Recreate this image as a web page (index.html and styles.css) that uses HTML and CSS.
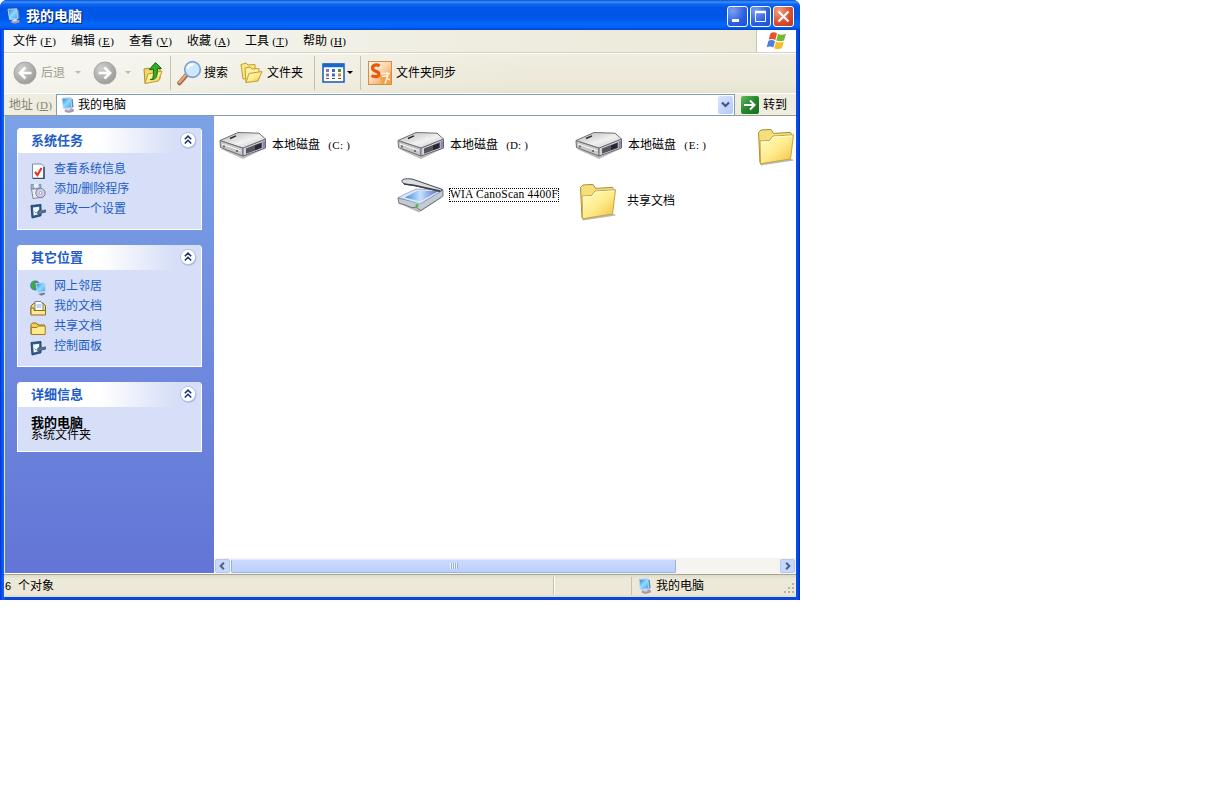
FILE: index.html
```html
<!DOCTYPE html>
<html lang="zh-CN">
<head>
<meta charset="utf-8">
<title>我的电脑</title>
<link rel="stylesheet" href="styles.css">
</head>
<body>
<svg class="defs" width="0" height="0">
  <defs>
    <linearGradient id="gFolder" x1="0" y1="0" x2="1" y2="1"><stop offset="0" stop-color="#fffbc4"/><stop offset=".5" stop-color="#ffec8d"/><stop offset="1" stop-color="#f0c040"/></linearGradient>
    <linearGradient id="gScreen" x1="0" y1="0" x2="1" y2="1"><stop offset="0" stop-color="#2474de"/><stop offset=".5" stop-color="#8edcff"/><stop offset="1" stop-color="#3a97ea"/></linearGradient>
    <linearGradient id="gMetal" x1="0" y1="0" x2="1" y2="1"><stop offset="0" stop-color="#b4b4b6"/><stop offset=".55" stop-color="#f1f1f2"/><stop offset="1" stop-color="#c4c4c8"/></linearGradient>
    <linearGradient id="gGlass" x1="0" y1="0" x2="1" y2="0"><stop offset="0" stop-color="#3d8be6"/><stop offset=".45" stop-color="#c4e2ff"/><stop offset="1" stop-color="#4a6fc8"/></linearGradient>
    <radialGradient id="gGray" cx=".35" cy=".3" r=".75"><stop offset="0" stop-color="#d0d0ce"/><stop offset="1" stop-color="#9a9a9a"/></radialGradient>
    <linearGradient id="gOrange" x1="0" y1="0" x2="1" y2="1"><stop offset="0" stop-color="#ffffff"/><stop offset=".45" stop-color="#fbd9b4"/><stop offset="1" stop-color="#f08c28"/></linearGradient>

    <symbol id="computer" viewBox="0 0 16 16">
      <path d="M5 13.200 9 11l4.500 1.500v1.700L9 15.600 5 14.600Z" fill="#a89cae" stroke="#8a8398" stroke-width=".5"/>
      <path d="M10.500 1 12.800 2.200 13.500 10 10.500 11.800Z" fill="#5d86c4"/>
      <path d="M2 1.300 10.800 .8 11.700 10.600 3.600 11.400Z" fill="url(#gScreen)" stroke="#b9d2f2" stroke-width="1"/>
      <path d="M6.500 11.500v2l4-.2v-2.200Z" fill="#d5dcec"/>
    </symbol>
    <symbol id="drive" viewBox="0 0 48 28">
      <path d="M2 18 24 28 47 17 24 20Z" fill="#777" opacity=".5"/>
      <path d="M1 9.500 24 17 24 25 1.500 16.500Z" fill="#c6c6c9" stroke="#6e6e72"/>
      <path d="M24 17 46.500 8 46.500 17 24 25Z" fill="#d4d4d8" stroke="#6a6870"/>
      <path d="M1 9.500 19 1.500 40 2.200 46.500 8 24 17Z" fill="url(#gMetal)" stroke="#707074"/>
      <path d="M27 17.500 43 11.200V17L27 22.800Z" fill="#58545e"/>
      <path d="m36 14.500 6-2.300v4.600l-6 2.200Z" fill="#29242f"/>
      <path d="m43.500 10.500 2.500-1v7l-2.500 1Z" fill="#8c84bb"/>
      <path d="m11 7.500 6-2.700" stroke="#2b2b2b" stroke-width="1.400"/>
      <path d="m3 13 19 6.700" stroke="#f6f6f6" stroke-width="1.200"/>
      <path d="M5 14.500v2M18 19v2" stroke="#444" stroke-width="1.300"/>
    </symbol>
    <symbol id="folder" viewBox="0 0 38 38">
      <path d="M3 35.500 35 31l2 1.500L4 37.500Z" fill="#8b8b84" opacity=".6"/>
      <path d="M1.500 4.500 4 2l10-.6 2.500 4 17-1 1.500 3L32 30 3 35Z" fill="#f6df7b" stroke="#a98d35"/>
      <path d="M3 13 12.500 12.500l3.500-4.500 20.500-1.200L33.500 31 3.500 35.800Z" fill="url(#gFolder)" stroke="#c6a33b"/>
      <path d="M4 14 13 13.600l3.600-4.600L35 8" fill="none" stroke="#fffde0"/>
    </symbol>
    <symbol id="scanner" viewBox="0 0 48 36">
      <path d="M3 27 22 35.500 46 20 24 28Z" fill="#666" opacity=".45"/>
      <path d="M1 21 24 26 46 13v6L24 33.500c-3-1-3-4-7-3-4 .7-7-3-15-4Z" fill="#c2cad6" stroke="#555d6b" stroke-width=".8"/>
      <path d="M1 20.500 19 12 46 13 23 27Z" fill="#dbe6f4" stroke="#8797ad" stroke-width=".7"/>
      <path d="m8 20.500 12-6.500 22-.3L23 24.500Z" fill="url(#gGlass)"/>
      <path d="M5 4.500C4.500 2 8 1.500 15 2L45.500 12.500 43 14.500 17 8.500 7 7Z" fill="#dcdde4" stroke="#44464f"/>
      <path d="m7 7 11 1.500 25 5.500" fill="none" stroke="#3e4048" stroke-width="1.500"/>
      <circle cx="20" cy="28.500" r="1.600" fill="#42c531"/>
    </symbol>
    <symbol id="settings" viewBox="0 0 16 16">
      <path d="M1 2.500 11 1.500v11.300L2 15Z" fill="#2f5c92" stroke="#1d3d66" stroke-width=".9"/>
      <path d="m3 4.400 6.200-.7v7.400L3.700 12.500Z" fill="#f2f9ff"/>
      <path d="m4.600 8.500 1.600 1.700 3-3.200" fill="none" stroke="#6aa0cf" stroke-width="1"/>
      <path d="m8 8.500 3-2 1 1.200 3.500-.8v2.300l-3.500.6-1.500 1.500-3-.8Z" fill="#56759a" stroke="#2c4464" stroke-width=".7"/>
    </symbol>
    <symbol id="chev" viewBox="0 0 18 18">
      <circle cx="9.500" cy="9.800" r="8" fill="#8b9ed0" opacity=".6"/>
      <circle cx="9" cy="9" r="7.600" fill="#fff" stroke="#b6c2e6"/>
      <path d="m5.800 8.300 3.200-3.200 3.200 3.200M5.800 12.500l3.200-3.200 3.200 3.200" fill="none" stroke="#1b3580" stroke-width="1.600"/>
    </symbol>
  </defs>
</svg>

<div class="window">
  <header class="titlebar">
    <svg class="i16"><use href="#computer"/></svg>
    <h1 class="title">我的电脑</h1>
    <div class="controls">
      <span class="ctl"><svg viewBox="0 0 19 19"><path d="M4 13.500h7" stroke="#fff" stroke-width="3"/></svg></span>
      <span class="ctl"><svg viewBox="0 0 19 19"><path d="M4.500 4.500h10v10h-10Z" fill="none" stroke="#fff"/><path d="M4 5h11" stroke="#fff" stroke-width="2.500"/></svg></span>
      <span class="ctl close"><svg viewBox="0 0 19 19"><path d="m4.500 4.500 10 10m0-10-10 10" stroke="#fff" stroke-width="2.200"/></svg></span>
    </div>
  </header>

  <div class="frame">
    <nav class="menubar">
      <span class="menu">文件<b class="key"><i>(</i><u>F</u><i>)</i></b></span>
      <span class="menu">编辑<b class="key"><i>(</i><u>E</u><i>)</i></b></span>
      <span class="menu">查看<b class="key"><i>(</i><u>V</u><i>)</i></b></span>
      <span class="menu">收藏<b class="key"><i>(</i><u>A</u><i>)</i></b></span>
      <span class="menu">工具<b class="key"><i>(</i><u>T</u><i>)</i></b></span>
      <span class="menu">帮助<b class="key"><i>(</i><u>H</u><i>)</i></b></span>
      <span class="flag"><svg width="22" height="20" viewBox="0 0 22 20">
        <path d="M4.500 2.200Q8 .3 11 2.400L9.300 9Q6 7 2.700 8.600Z" fill="#e8542a"/>
        <path d="M12 2.900Q15.500 4.500 20 2.800L18 9.500Q14 11 10.300 9.400Z" fill="#76b82f"/>
        <path d="M2.400 9.800Q6 8.100 9 10.200L7.300 16.600Q4 14.600.7 16.200Z" fill="#4a7fdc"/>
        <path d="M10 10.600Q13.700 12.300 17.700 10.700L15.900 17.300Q12 19 8.200 17.200Z" fill="#f7bd28"/>
      </svg></span>
    </nav>

    <div class="toolbar">
      <svg class="nav-icon" viewBox="0 0 24 24"><circle cx="12" cy="12" r="11" fill="url(#gGray)" stroke="#a6a6a2"/><path d="M18.500 12H7m5.500-5.500L7 12l5.500 5.500" fill="none" stroke="#fff" stroke-width="2.700"/></svg>
      <span class="label muted back">后退</span>
      <i class="caret dim"></i>
      <svg class="nav-icon forward" viewBox="0 0 24 24"><circle cx="12" cy="12" r="11" fill="url(#gGray)" stroke="#a6a6a2"/><path d="M5.500 12H17m-5.500-5.500L17 12l-5.500 5.500" fill="none" stroke="#fff" stroke-width="2.700"/></svg>
      <i class="caret dim second"></i>
      <svg class="up" width="22" height="24" viewBox="0 0 22 24"><path d="m2 8 5-1 2 2 9-1.500V18L3 22.500Z" fill="#f3d766" stroke="#b08f2c"/><path d="M3 22.500 6 13l14-3-3.500 10Z" fill="url(#gFolder)" stroke="#c29d31"/><path d="M8 18.500c3 0 3.500-2 3.500-10H7.300L13.500 1.500l6 6h-4c0 9-2 12-7.500 11Z" fill="#36ac28" stroke="#14710f"/></svg>
      <i class="sep s1"></i>
      <svg class="search" width="25" height="26" viewBox="0 0 25 26"><path d="m2.500 23 7-8" stroke="#a5694a" stroke-width="4.500" stroke-linecap="round"/><path d="m2.500 22.300 6.500-7.500" stroke="#e0a880" stroke-width="2.500" stroke-linecap="round"/><circle cx="15.500" cy="9.500" r="7.800" fill="#cceaff" stroke="#7da1d2" stroke-width="1.700"/><path d="M10.500 9c.5-3 3-4.500 6-4.500" fill="none" stroke="#fff" stroke-width="2"/></svg>
      <span class="label">搜索</span>
      <svg class="folders" width="23" height="22" viewBox="0 0 23 22"><path d="M1 2.500 6 1l2 2 7-.5v13L3 17Z" fill="#fbe684" stroke="#c29c30"/><path d="m5 6 5-1 2 2 7-.5V17L6 20.500Z" fill="#fff0a0" stroke="#c29c30"/><path d="m6 20.500 3-9 13-2-4 9.500Z" fill="url(#gFolder)" stroke="#c29c30"/></svg>
      <span class="label">文件夹</span>
      <i class="sep s2"></i>
      <svg class="views" width="23" height="20" viewBox="0 0 23 20"><rect x="1" y="1" width="21" height="18" fill="#fff" stroke="#1458b4" stroke-width="1.500"/><path d="M1 2.500h21" stroke="#1767cf" stroke-width="3.500"/><path d="M4 7.500h3M4 12h3" stroke="#8d789f" stroke-width="3"/><path d="M10 7.500h3M10 12h3" stroke="#4469c4" stroke-width="3"/><path d="M16 7.500h3" stroke="#3b9837" stroke-width="3"/><path d="M16 12h3" stroke="#d98828" stroke-width="3"/><path d="M4 15.500h3m3 0h3m3 0h3" stroke="#555"/></svg>
      <i class="caret"></i>
      <i class="sep s3"></i>
      <svg class="sync" width="24" height="24" viewBox="0 0 24 24"><rect x=".5" y=".5" width="23" height="23" fill="url(#gOrange)" stroke="#d88b48"/><path d="m11 15 12-4v12H14Z" fill="#f4a24a"/><path d="M12 12.500h10M14 15.500l6-1-3 8M19 11v6l3 2" stroke="#fff3df" stroke-width="1.500" fill="none"/><path d="M11.500 5C8.500 3 4.500 4 4.500 7c0 4 6.500 2.500 6.500 6 0 3-4.500 3.500-7.500 1.500" fill="none" stroke="#e7590b" stroke-width="3.200"/></svg>
      <span class="label">文件夹同步</span>
    </div>

    <div class="addressbar">
      <span class="address-label">地址<b class="key"><i>(</i><u>D</u><i>)</i></b></span>
      <div class="field"><svg class="i16"><use href="#computer"/></svg><span class="field-text">我的电脑</span>
        <span class="drop"><svg viewBox="0 0 15 17"><path d="m4 6.500 3.500 3.500L11 6.500" fill="none" stroke="#3f5683" stroke-width="2.200"/></svg></span></div>
      <span class="go"><svg viewBox="0 0 18 18"><path d="M3 9h10M9 4.500 13.500 9 9 13.500" fill="none" stroke="#fff" stroke-width="2"/></svg></span>
      <span>转到</span>
    </div>

    <main class="body">
      <aside class="side">
        <section class="panel p1">
          <h2 class="head">系统任务<svg class="chev"><use href="#chev"/></svg></h2>
          <ul class="links">
            <li class="link"><svg viewBox="0 0 16 16"><path d="M2.500 1h9L14 3.500V15.500H2.500Z" fill="#fff" stroke="#7a8bab"/><path d="M14 4v11.500H3" fill="none" stroke="#344a71" stroke-width="1.500"/><path d="m5 9 2.500 3 4-7" fill="none" stroke="#df3825" stroke-width="2.200"/></svg>查看系统信息</li>
            <li class="link"><svg viewBox="0 0 16 16"><path d="M1 1.500h10v5H1Z" fill="#8fb0cf" stroke="#6d8bab" stroke-width=".7"/><path d="M4 .8h4.500v4H4Z" fill="#e9f5ef"/><path d="M1.500 6h9.500l2 8-10 1.500Z" fill="#eef1f4" stroke="#77889a"/><circle cx="10.500" cy="10" r="4.700" fill="#d5c9ee" stroke="#8077a9"/><path d="m10.500 10 2-4 2 2Z" fill="#9ee3ba"/><circle cx="10.500" cy="10" r="1.400" fill="#fff" stroke="#777" stroke-width=".5"/></svg>添加/删除程序</li>
            <li class="link"><svg><use href="#settings"/></svg>更改一个设置</li>
          </ul>
        </section>
        <section class="panel p2">
          <h2 class="head">其它位置<svg class="chev"><use href="#chev"/></svg></h2>
          <ul class="links">
            <li class="link"><svg viewBox="0 0 16 16"><circle cx="5.200" cy="5.500" r="5" fill="#3977cb"/><path d="M2 2c2-2 5-1 5 1L5 5l1 3-2 2C1 8 0 5 2 2Z" fill="#3faa42"/><path d="m6 3.500 9-.8.500 8.500-8 1.500Z" fill="url(#gScreen)" stroke="#c3d7ef"/><path d="m8 14 6-1.500 1.500 1.500-4 1.700Z" fill="#777d96"/></svg>网上邻居</li>
            <li class="link"><svg viewBox="0 0 16 16"><path d="M1 6 4 3h9l2.500 3v8.500H1Z" fill="#f5dc72" stroke="#82691d"/><path d="M5 1.500h6L13 4v7H5Z" fill="#fff" stroke="#6f87a5"/><path d="M6.500 5h5M6.500 7h5" stroke="#8ca8c9"/><path d="M1 8h3v2.500h11.500v4.500H1Z" fill="#ffe990" stroke="#8b7021"/></svg>我的文档</li>
            <li class="link"><svg viewBox="0 0 16 16"><path d="M1 4.500 2.500 3h4L8 5h6.500v9H1Z" fill="#f3cf55" stroke="#8e6c19"/><path d="M1.300 7.500H7L8.500 6h6.700v8.500H1.300Z" fill="#ffe98f" stroke="#a17d20"/></svg>共享文档</li>
            <li class="link"><svg><use href="#settings"/></svg>控制面板</li>
          </ul>
        </section>
        <section class="panel p3">
          <h2 class="head">详细信息<svg class="chev"><use href="#chev"/></svg></h2>
          <div class="details"><strong class="name">我的电脑</strong><span>系统文件夹</span></div>
        </section>
      </aside>

      <div class="content">
        <div class="files">
          <div class="col">
            <div class="file"><svg class="drive"><use href="#drive"/></svg><span class="disk">本地磁盘<b class="key"><i>(</i><i>C</i><i class="colon">:</i><i>)</i></b></span></div>
          </div>
          <div class="col">
            <div class="file"><svg class="drive"><use href="#drive"/></svg><span class="disk">本地磁盘<b class="key"><i>(</i><i>D</i><i class="colon">:</i><i>)</i></b></span></div>
            <div class="file scan"><svg class="scanner"><use href="#scanner"/></svg><span class="focus">WIA CanoScan 4400F</span></div>
          </div>
          <div class="col">
            <div class="file"><svg class="drive"><use href="#drive"/></svg><span class="disk">本地磁盘<b class="key"><i>(</i><i>E</i><i class="colon">:</i><i>)</i></b></span></div>
            <div class="file shared"><svg class="folder"><use href="#folder"/></svg><span>共享文档</span></div>
          </div>
          <div class="col">
            <div class="file last"><svg class="folder"><use href="#folder"/></svg></div>
          </div>
        </div>
        <div class="scroll">
          <span class="sbtn"><svg viewBox="0 0 14 13"><path d="M8.500 3 5 6.500 8.500 10" fill="none" stroke="#4d6185" stroke-width="2.200"/></svg></span>
          <span class="thumb"><i class="grip"></i></span>
          <span class="sbtn end"><svg viewBox="0 0 14 13"><path d="M5.500 3 9 6.500 5.500 10" fill="none" stroke="#4d6185" stroke-width="2.200"/></svg></span>
        </div>
      </div>
    </main>

    <footer class="status">
      <span class="count"><b class="six">6</b>个对象</span>
      <span class="blank"></span>
      <span class="zone"><svg class="i16"><use href="#computer"/></svg>我的电脑</span>
      <svg class="resize" width="12" height="12" viewBox="0 0 12 12"><path d="M9 1h2M5 5h2m2 0h2M1 9h2m2 0h2m2 0h2" stroke="#b8b4a2" stroke-width="2"/></svg>
    </footer>
  </div>
</div>
</body>
</html>
```
FILE: styles.css
```css
* { box-sizing: border-box; }
body { margin: 0; background: #fff; color: #000; font: 12px/14px "Liberation Sans", "Noto Sans CJK SC", sans-serif; }
.defs { position: absolute; }
svg { display: block; flex: none; }
span { white-space: nowrap; }
.i16 { width: 16px; height: 16px; }
.key { display: inline-flex; margin-left: 2px; font: 11px/14px "Liberation Serif", "Noto Sans CJK SC", serif; }
.key i, .key u { width: 6px; font-style: normal; display: flex; justify-content: center; }
.key u { width: 8px; height: 13px; text-decoration: none; border-bottom: 1px solid currentColor; margin: 0 -1px; }

.window { width: 800px; height: 600px; display: flex; flex-direction: column; background: linear-gradient(90deg, #0831d9 0, #0855ee 2px, #1664f5 4px, #0b45df 5px, #0b45df 795px, #0a50ee 797px, #0030c4 800px); border-radius: 7px 7px 0 0; overflow: hidden; }
.titlebar { height: 30px; flex: none; display: flex; align-items: center; padding: 2px 6px 0 6px; background: linear-gradient(#0a4fd0 0, #3c91ff 2px, #0f68f0 4px, #0055e5 8px, #0057e8 18px, #0567fb 24px, #0162f5 27px, #0043cf 30px); }
.title { flex: 1; margin: 0 0 0 4px; font-size: 14px; line-height: 18px; font-weight: 700; color: #fff; text-shadow: 1px 1px 1px #06246e; }
.controls { display: flex; gap: 2px; }
.ctl { width: 21px; height: 21px; border: 1px solid #fff; border-radius: 3px; background: radial-gradient(circle at 25% 20%, #7da0f4, #2a5ee0 60%, #1d4fd2); }
.ctl.close { background: radial-gradient(circle at 25% 20%, #f0a080, #dc5030 55%, #b93616); }

.frame { flex: 1; margin: 0 4px 3px 4px; min-height: 0; display: flex; flex-direction: column; background: #ece9d8; }
.menubar { height: 23px; flex: none; display: flex; align-items: center; gap: 16px; padding-left: 9px; background: linear-gradient(90deg, #f7f8f6, #efede0 60%, #ece9d8); border-bottom: 1px solid #d6d2c0; }
.menu { width: 42px; display: flex; }
.flag { width: 40px; height: 22px; margin-left: auto; background: #fff; border-left: 1px solid #c9c5b4; display: grid; place-items: center; }

.toolbar { height: 40px; flex: none; display: flex; align-items: center; padding: 0 0 2px 9px; border-top: 1px solid #fff; background: linear-gradient(90deg, rgba(250,250,248,.7), rgba(236,233,216,.3) 65%), linear-gradient(#f1efe4, #ece9d8 75%, #e5e1ce); }
.nav-icon { width: 24px; height: 24px; }
.forward { margin-left: 12px; }
.muted { color: #a09d8f; }
.back { margin: 0 10px 0 4px; }
.caret { width: 0; border: 3px solid transparent; border-top-color: #000; border-bottom: 0; }
.caret.dim { border-top-color: #bebbad; }
.second { margin-left: 8px; }
.up { margin-left: 11px; }
.sep { width: 1px; height: 34px; background: #c5c2b1; }
.s1 { margin-left: 6px; }
.search { margin: 0 2px 0 6px; }
.folders { margin: 0 4px 0 12px; }
.s2 { margin: 0 7px 0 11px; }
.views { margin-right: 2px; }
.s3 { margin: 0 7px; }
.sync { margin-right: 4px; }

.addressbar { height: 23px; flex: none; display: flex; align-items: center; padding-left: 5px; border-top: 1px solid #fff; border-bottom: 1px solid #9c9a8d; background: #efeddf; }
.address-label { width: 47px; display: flex; color: #858275; }
.field { width: 679px; height: 22px; display: flex; align-items: center; padding: 0 1px 0 3px; background: #fff; border: 1px solid #7f9db9; }
.field-text { margin: 1px 0 0 2px; flex: 1; }
.drop { width: 15px; height: 18px; border-radius: 2px; background: linear-gradient(135deg, #dbe6ff, #b2c8f5); }
.go { width: 18px; height: 18px; margin: 0 4px 0 6px; border-radius: 2px; background: linear-gradient(135deg, #65bb65, #25862b 50%, #176f22); }

.body { flex: 1; min-height: 0; display: flex; }
.side { width: 210px; flex: none; padding: 12px 12px 0 12px; border-left: 1px solid #dce6fa; border-bottom: 1px solid #fff; background: linear-gradient(#7ba2e7, #6375d6); display: flex; flex-direction: column; gap: 15px; }
.panel { width: 185px; border-radius: 4px 4px 0 0; overflow: hidden; background: #d6dff7; border: 1px solid #fff; border-top: 0; }
.p1 { height: 102px; }
.p2 { height: 122px; }
.p3 { height: 70px; }
.head { height: 25px; margin: 0 -1px; padding: 0 5px 0 14px; display: flex; align-items: center; justify-content: space-between; font-size: 13px; line-height: 23px; font-weight: 700; color: #215dc6; background: linear-gradient(90deg, #fff 45%, #d6dff7 85%); }
.chev { width: 18px; height: 18px; margin-top: -1px; }
.links { list-style: none; margin: 0; padding: 6px 0 0 12px; }
.link { height: 20px; display: flex; align-items: center; gap: 8px; color: #215dc6; line-height: 20px; }
.link svg { width: 16px; height: 16px; margin-top: 4px; }
.details { padding: 10px 0 0 13px; display: flex; flex-direction: column; line-height: 12px; }
.name { font-size: 13px; line-height: 12px; }

.content { flex: 1; min-width: 0; display: flex; flex-direction: column; background: #fff; }
.files { flex: 1; display: flex; overflow: hidden; }
.col { width: 178px; flex: none; padding: 4px 0 0 5px; }
.file { height: 50px; display: flex; align-items: center; gap: 5px; }
.disk .key { margin-left: 7px; }
.disk .colon { justify-content: flex-start; padding-left: 1px; }
.drive { width: 48px; height: 28px; }
.scanner { width: 48px; height: 36px; }
.folder { width: 38px; height: 38px; margin: 0 5px 0 4px; }
.shared { height: 64px; }
.shared span { margin-top: -3px; }
.last { height: 54px; }
.focus { width: 110px; height: 14px; margin-left: -1px; outline: 1px dotted #000; outline-offset: -1px; padding-left: 1px; letter-spacing: .22px; font: 11.5px/13px "Liberation Serif", serif; }
.scroll { height: 16px; flex: none; display: flex; padding-top: 1px; background: #f5f4ef; }
.sbtn { width: 15px; height: 14px; margin: 0 1px; border-radius: 2px; background: #c8d7fc; border: 1px solid #b4c8f6; }
.thumb { width: 445px; height: 14px; border-radius: 2px; border: 1px solid #98b1e4; border-top-color: #dfe8ff; background: linear-gradient(#cbdafe, #bcd0fd); display: grid; place-items: center; }
.grip { width: 8px; height: 6px; background: repeating-linear-gradient(90deg, #eef4fe 0 1px, #8cb0f8 1px 2px); }
.end { margin-left: auto; }

.status { height: 23px; flex: none; display: flex; align-items: center; border-top: 1px solid #a7a491; background: linear-gradient(#dedac8, #ece9d8 4px, #ece9d8 19px, #dfdcc9); }
.count { width: 549px; display: flex; padding-left: 1px; }
.six { width: 13px; font-weight: 400; font-size: 11px; }
.blank { width: 79px; height: 18px; border-left: 1px solid #c6c2b0; border-right: 1px solid #c6c2b0; box-shadow: inset 1px 0 #fff; }
.zone { flex: 1; display: flex; align-items: center; gap: 3px; padding-left: 5px; }
.resize { margin: 6px 1px 0 0; }
```
